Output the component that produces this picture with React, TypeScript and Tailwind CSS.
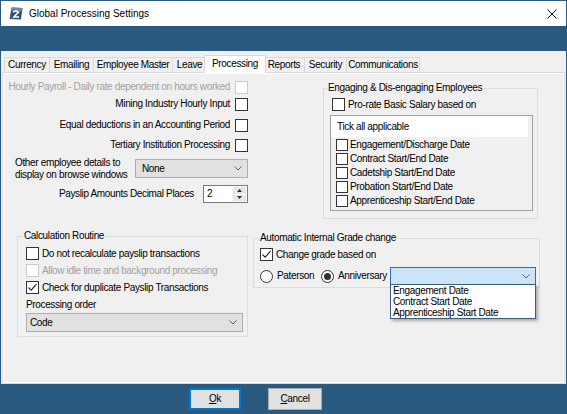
import React from "react";

function Check({ checked = false, disabled = false, small = false }: { checked?: boolean; disabled?: boolean; small?: boolean }) {
  return (
    <span
      className={`flex shrink-0 items-center justify-center border bg-white ${small ? "h-[12px] w-[12px]" : "h-[13px] w-[13px]"} ${disabled ? "border-[#cccccc]" : "border-[#333333]"}`}
    >
      {checked && (
        <svg width="11" height="11" viewBox="0 0 11 11">
          <path d="M1.5 5.5 L4.2 8.2 L9.5 2.2" fill="none" stroke="#222" strokeWidth="1.1" />
        </svg>
      )}
    </span>
  );
}

function Radio({ checked = false }: { checked?: boolean }) {
  return (
    <span className="flex h-[13px] w-[13px] shrink-0 items-center justify-center rounded-full border border-[#333333] bg-white">
      {checked && <span className="h-[7px] w-[7px] rounded-full bg-[#333333]" />}
    </span>
  );
}

function Chevron() {
  return (
    <svg width="8" height="5" viewBox="0 0 8 5" className="shrink-0">
      <path d="M0.5 0.5 L4 4 L7.5 0.5" fill="none" stroke="#606060" strokeWidth="1" />
    </svg>
  );
}

function Tab({ label, w, selected = false }: { label: string; w: string; selected?: boolean }) {
  if (selected) {
    return (
      <div
        className={`relative z-10 -mb-px ml-[-3px] mr-[-2px] flex h-[18px] items-start justify-center border border-b-0 border-[#d9d9d9] bg-white pt-[2px] ${w}`}
      >
        {label}
      </div>
    );
  }
  return (
    <div className={`-ml-px flex h-[15px] items-center justify-center border border-b-0 border-[#d9d9d9] bg-[#f0f0f0] ${w}`}>
      {label}
    </div>
  );
}

export default function App() {
  return (
    <div className="flex h-[414px] w-[567px] flex-col overflow-hidden border border-[#2b5a80] bg-[#2b5a80] font-['Liberation_Sans',Arial,sans-serif] text-[10px] leading-[12px] tracking-[-0.35px] text-black">
      {/* Title bar */}
      <div className="flex h-[25px] shrink-0 items-center bg-white pl-[8px] pr-[7px]">
        <svg width="14" height="13" viewBox="0 0 14 13" className="shrink-0">
          <path d="M2.5 0.5 L13.5 1 L12 12.5 L0.5 12 Z" fill="#35536f" />
          <path d="M2.5 0.5 L13.5 1 L13 4 L2 3.5 Z" fill="#6f8aa3" />
          <path d="M4 5 Q7 3 9.5 5 L5 10 L10 10" stroke="white" strokeWidth="1.6" fill="none" />
        </svg>
        <span className="ml-[6px] text-[10px] tracking-normal">Global Processing Settings</span>
        <svg width="10" height="10" viewBox="0 0 10 10" className="ml-auto mr-[2px]">
          <path d="M0.5 0.5 L9.5 9.5 M9.5 0.5 L0.5 9.5" stroke="#111" strokeWidth="1" />
        </svg>
      </div>
      {/* Blue band */}
      <div className="h-[25px] shrink-0" />
      {/* Main gray area */}
      <div className="flex h-[333px] shrink-0 flex-col bg-[#f0f0f0] px-[1px] pt-[4px]">
        <div className="ml-[2px] flex h-[17px] shrink-0 items-end">
          <div className="flex h-[15px] w-[46px] items-center justify-center border border-b-0 border-[#d9d9d9] bg-[#f0f0f0]">Currency</div>
          <Tab label="Emailing" w="w-[45px]" />
          <Tab label="Employee Master" w="w-[80px]" />
          <Tab label="Leave" w="w-[35px]" />
          <Tab label="Processing" w="w-[62px]" selected />
          <Tab label="Reports" w="w-[42px]" />
          <Tab label="Security" w="w-[43px]" />
          <Tab label="Communications" w="w-[74px]" />
        </div>
        {/* Panel */}
        <div className="flex flex-1 flex-col border border-[#d9d9d9] bg-[#f0f0f0] shadow-[inset_0_0_0_1px_#ffffff]">
          {/* Top section */}
          <div className="flex h-[152px] shrink-0">
            {/* Left column */}
            <div className="flex w-[250px] shrink-0 flex-col pr-[5px]">
              <div className="mt-[6px] flex h-[16px] items-center justify-end gap-[5px]">
                <span className="text-[#a0a0a0]">Hourly Payroll - Daily rate dependent on hours worked</span>
                <Check disabled />
              </div>
              <div className="mt-[1px] flex h-[16px] items-center justify-end gap-[5px]">
                <span>Mining Industry Hourly Input</span>
                <Check />
              </div>
              <div className="mt-[5px] flex h-[16px] items-center justify-end gap-[5px]">
                <span>Equal deductions in an Accounting Period</span>
                <Check />
              </div>
              <div className="mt-[4px] flex h-[16px] items-center justify-end gap-[5px]">
                <span>Tertiary Institution Processing</span>
                <Check />
              </div>
              <div className="mt-[5px] flex h-[20px] items-start">
                <div className="ml-[12px] -mt-[1px] flex flex-col">
                  <span>Other employee details to</span>
                  <span>display on browse windows</span>
                </div>
                <div className="ml-auto mt-[1px] flex h-[19px] w-[113px] items-center justify-between border border-[#adadad] bg-[#e1e1e1] pl-[6px] pr-[5px]">
                  <span>None</span>
                  <Chevron />
                </div>
              </div>
              <div className="mt-[7px] flex h-[18px] items-center justify-end gap-[9px]">
                <span>Payslip Amounts Decimal Places</span>
                <div className="flex h-[18px] w-[45px] border border-[#7a7a7a] bg-white">
                  <span className="flex-1 pl-[3px] leading-[16px]">2</span>
                  <div className="my-[1px] mr-[1px] flex w-[13px] flex-col gap-[1px]">
                    <div className="flex flex-1 items-center justify-center bg-[#e6e6e6]">
                      <svg width="5" height="3" viewBox="0 0 5 3"><path d="M0 3 L2.5 0 L5 3 Z" fill="#333" /></svg>
                    </div>
                    <div className="flex flex-1 items-center justify-center bg-[#e6e6e6]">
                      <svg width="5" height="3" viewBox="0 0 5 3"><path d="M0 0 L2.5 3 L5 0 Z" fill="#333" /></svg>
                    </div>
                  </div>
                </div>
              </div>
            </div>
            {/* Right column */}
            <div className="flex flex-1 flex-col">
              <fieldset className="ml-[70px] mt-[9px] w-[215px] border border-[#dcdcdc] pb-[7px]">
                <legend className="ml-[3px] px-[1px] leading-[12px]">Engaging &amp; Dis-engaging Employees</legend>
                <div className="ml-[8px] mt-[4px] flex h-[13px] items-center gap-[3px]">
                  <Check />
                  <span>Pro-rate Basic Salary based on</span>
                </div>
                <div className="ml-[6px] mt-[4px] flex h-[96px] w-[203px] flex-col border border-[#a0a0a0] bg-[#f0f0f0]">
                  <div className="mr-[4px] flex h-[21px] shrink-0 items-center bg-white pl-[6px]">Tick all applicable</div>
                  <div className="mt-[1px] flex flex-col">
                    {[
                      "Engagement/Discharge Date",
                      "Contract Start/End Date",
                      "Cadetship Start/End Date",
                      "Probation Start/End Date",
                      "Apprenticeship Start/End Date",
                    ].map((t) => (
                      <div key={t} className="flex h-[14px] items-center gap-[2px] pl-[5px]">
                        <Check small />
                        <span>{t}</span>
                      </div>
                    ))}
                  </div>
                </div>
              </fieldset>
            </div>
          </div>
          {/* Bottom section */}
          <div className="flex items-start">
            <div className="w-[250px] shrink-0">
              <fieldset className="ml-[14px] mt-[5px] w-[231px] border border-[#dcdcdc] pb-[4px] pl-[8px]">
                <legend className="ml-[-3px] px-[1px] leading-[12px]">Calculation Routine</legend>
                <div className="mt-[5px] flex h-[13px] items-center gap-[3px]">
                  <Check />
                  <span>Do not recalculate payslip transactions</span>
                </div>
                <div className="mt-[4px] flex h-[13px] items-center gap-[3px]">
                  <Check disabled />
                  <span className="text-[#a0a0a0]">Allow idle time and background processing</span>
                </div>
                <div className="mt-[4px] flex h-[13px] items-center gap-[3px]">
                  <Check checked />
                  <span>Check for duplicate Payslip Transactions</span>
                </div>
                <div className="mt-[5px] h-[12px]">Processing order</div>
                <div className="mt-[2px] flex h-[19px] w-[217px] items-center justify-between border border-[#adadad] bg-[#e1e1e1] pl-[3px] pr-[5px]">
                  <span>Code</span>
                  <Chevron />
                </div>
              </fieldset>
            </div>
            <fieldset className="mt-[7px] w-[287px] border border-[#dcdcdc] pb-[2px] pl-[6px]">
              <legend className="ml-[-1px] px-[1px] leading-[12px]">Automatic Internal Grade change</legend>
              <div className="mt-[4px] flex h-[13px] items-center gap-[3px]">
                <Check checked />
                <span>Change grade based on</span>
              </div>
              <div className="mt-[6px] flex h-[18px] items-center">
                <div className="flex w-[61px] items-center gap-[4px]">
                  <Radio />
                  <span>Paterson</span>
                </div>
                <div className="flex w-[69px] items-center gap-[4px]">
                  <Radio checked />
                  <span>Anniversary</span>
                </div>
                <div className="relative">
                  <div className="flex h-[18px] w-[146px] items-center justify-end border border-[#2a6eb0] bg-[#cce4f7] pr-[5px]">
                    <Chevron />
                  </div>
                  <div className="absolute left-0 top-[17px] z-20 flex w-[146px] flex-col border border-[#3c5f80] bg-white py-[0px] pl-[2px] shadow-[2px_2px_3px_rgba(0,0,0,0.3)]">
                    <span className="h-[11px] leading-[11px]">Engagement Date</span>
                    <span className="h-[11px] leading-[11px]">Contract Start Date</span>
                    <span className="h-[11px] leading-[11px]">Apprenticeship Start Date</span>
                  </div>
                </div>
              </div>
            </fieldset>
          </div>
        </div>
      </div>
      {/* Bottom button bar */}
      <div className="flex flex-1 items-start pl-[188px] pt-[4px]">
        <button className="flex h-[22px] w-[52px] items-center justify-center border-2 border-[#0078d7] bg-[#e1e1e1] text-black">
          <span><span className="underline">O</span>k</span>
        </button>
        <button className="ml-[27px] flex h-[22px] w-[54px] items-center justify-center border border-[#adadad] bg-[#e1e1e1] text-black">
          <span><span className="underline">C</span>ancel</span>
        </button>
      </div>
    </div>
  );
}
